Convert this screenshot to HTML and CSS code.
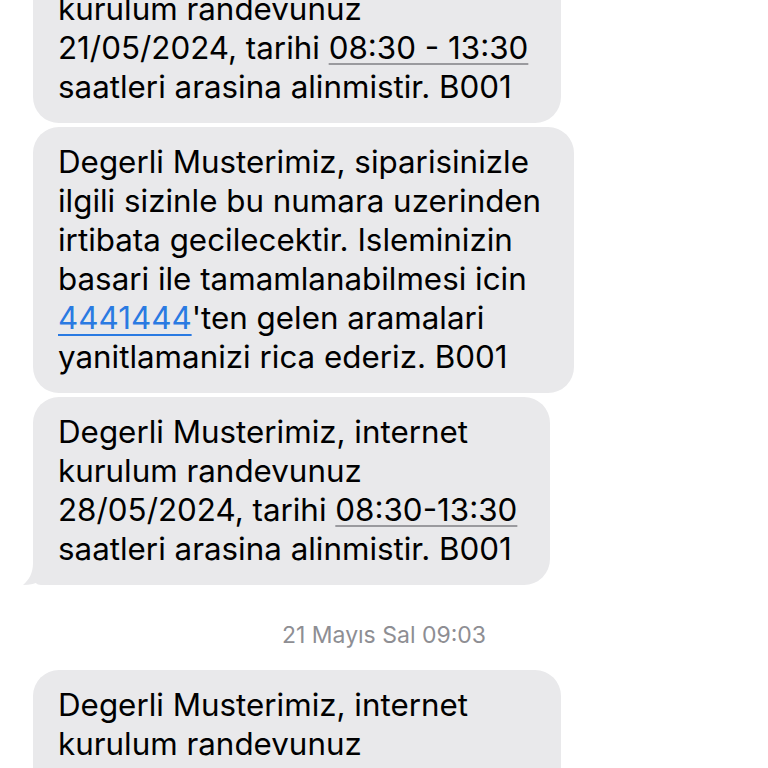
FILE: index.html
```html
<!DOCTYPE html>
<html lang="tr">
<head>
<meta charset="utf-8">
<title>Mesajlar</title>
<link rel="stylesheet" href="styles.css">
</head>
<body>
<div class="thread">
  <div class="group">
    <div class="bubble">
      <span class="line">Degerli Musterimiz, internet</span>
      <span class="line">kurulum randevunuz</span>
      <span class="line">21/05/2024, tarihi <span class="detect">08:30 - 13:30</span></span>
      <span class="line">saatleri arasina alinmistir. B001</span>
    </div>
    <div class="bubble">
      <span class="line">Degerli Musterimiz, siparisinizle</span>
      <span class="line">ilgili sizinle bu numara uzerinden</span>
      <span class="line">irtibata gecilecektir. Isleminizin</span>
      <span class="line">basari ile tamamlanabilmesi icin</span>
      <span class="line"><a class="link" href="#">4441444</a>'ten gelen aramalari</span>
      <span class="line">yanitlamanizi rica ederiz. B001</span>
    </div>
    <div class="bubble tailed">
      <span class="line">Degerli Musterimiz, internet</span>
      <span class="line">kurulum randevunuz</span>
      <span class="line">28/05/2024, tarihi <span class="detect">08:30-13:30</span></span>
      <span class="line">saatleri arasina alinmistir. B001</span>
      <svg class="tail" width="30" height="22" viewBox="0 0 30 22" aria-hidden="true">
        <path d="M10 0 C10 10 6 17 0 22 C7 22 13 20.5 17 18 C21 20.5 25 22 30 22 L30 0 Z" fill="#e9e9eb"/>
      </svg>
    </div>
  </div>
  <div class="stamp">21 Mayıs Sal 09:03</div>
  <div class="group">
    <div class="bubble">
      <span class="line">Degerli Musterimiz, internet</span>
      <span class="line">kurulum randevunuz</span>
      <span class="line">21/05/2024, tarihi <span class="detect">08:30 - 13:30</span></span>
      <span class="line">saatleri arasina alinmistir. B001</span>
    </div>
  </div>
</div>
</body>
</html>
```
FILE: styles.css
```css
html, body {
  margin: 0;
  padding: 0;
  background: #ffffff;
}
body {
  width: 768px;
  height: 768px;
  overflow: hidden;
  font-family: Inter, "Noto Sans", sans-serif;
  color: #000;
}
.thread {
  margin-top: -65px;
  padding-left: 33px;
  display: flex;
  flex-direction: column;
}
.group {
  display: flex;
  flex-direction: column;
  align-items: flex-start;
  gap: 4px;
}
.bubble {
  position: relative;
  background: #e9e9eb;
  border-radius: 26px;
  padding: 16px 33px 16px 25px;
  display: flex;
  flex-direction: column;
  font-size: 31.35px;
  line-height: 39px;
  letter-spacing: 0;
  white-space: nowrap;
}
.bubble.tailed {
  border-bottom-left-radius: 8px;
}
.tail {
  position: absolute;
  left: -10px;
  bottom: 0;
}
.detect {
  text-decoration: underline;
  text-decoration-color: #9a9a9e;
  text-decoration-thickness: 1.5px;
  text-underline-offset: 4px;
}
.link {
  color: #2a7ae2;
  text-decoration: underline;
  text-decoration-thickness: 2px;
  text-underline-offset: 5px;
}
.stamp {
  margin: 36px 0 21px -33px;
  width: 768px;
  text-align: center;
  font-size: 23px;
  line-height: 28px;
  color: #8e8e93;
}
```
